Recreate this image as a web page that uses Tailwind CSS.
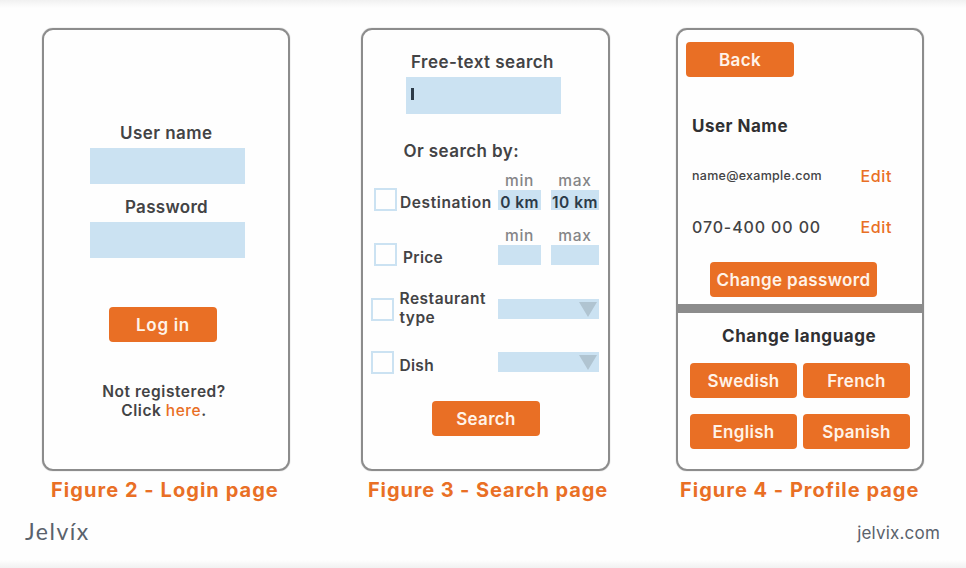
<!DOCTYPE html>
<html lang="en">
<head>
<meta charset="utf-8">
<title>Jelvix wireframes</title>
<script src="https://cdn.jsdelivr.net/npm/@tailwindcss/browser@4"></script>
</head>
<body class="w-[966px] h-[568px] overflow-hidden bg-[#fefefe] font-['Inter',sans-serif] font-semibold text-[#434345] text-[17px] leading-5 whitespace-nowrap flex flex-col">
<div class="h-2 bg-linear-to-b from-[#f1f1f1] to-[#fefefe] shrink-0"></div>
<main class="flex items-start mt-5 pl-[42px] shrink-0">

  <figure class="w-[248px]">
    <section class="h-[443px] border-2 border-[#8c8c8c] shadow-[0_0_1px_#8c8c8c] rounded-[11px] flex flex-col items-start">
      <label class="mt-[93px] ml-[76px] tracking-[0.45px]">User name</label>
      <div class="mt-[5px] ml-[46px] w-[155px] h-[36px] bg-[#cbe2f2]"></div>
      <label class="mt-[13px] ml-[81px] tracking-[0.3px]">Password</label>
      <div class="mt-[5px] ml-[46px] w-[155px] h-[36px] bg-[#cbe2f2]"></div>
      <button class="mt-[49px] ml-[65px] w-[108px] h-[35px] rounded bg-[#e96f25] text-[#fff3e8] tracking-[0.7px]">Log in</button>
      <p class="mt-[40px] ml-[57px] w-[126px] text-center text-[15.5px] leading-[19px] tracking-[0.55px]">Not registered?<br>Click <a class="font-medium text-[#e96f25]">here</a>.</p>
    </section>
    <figcaption class="mt-[9px] ml-[9px] text-[20px] font-bold tracking-[1.05px] text-[#e96f25]">Figure 2 - Login page</figcaption>
  </figure>

  <figure class="ml-[71px] w-[249px]">
    <section class="h-[443px] border-2 border-[#8c8c8c] shadow-[0_0_1px_#8c8c8c] rounded-[11px] flex flex-col items-start">
      <label class="mt-[22px] ml-[48px] tracking-[0.45px]">Free-text search</label>
      <div class="mt-[5px] ml-[43px] w-[155px] h-[37px] bg-[#cbe2f2] pt-[11px] pl-[5px]"><div class="w-[2.5px] h-[12px] bg-[#2c3a48]"></div></div>
      <p class="mt-[27px] ml-[40.5px] tracking-[0.42px]">Or search by:</p>

      <div class="mt-[9px] h-[41px] flex items-start text-[15.5px] w-full">
        <i class="mt-[18px] ml-[11px] size-[23px] border-2 border-[#cbe2f2] shrink-0"></i>
        <span class="mt-[23px] ml-[3px] w-[98px] tracking-[0.6px]">Destination</span>
        <div class="w-[43px] shrink-0 text-center"><div class="pt-px -mb-px font-medium text-[#858587] tracking-[0.75px]">min</div><div class="h-5 bg-[#cbe2f2] text-[#2c3a48] pt-[3px] tracking-[0.4px]">0 km</div></div>
        <div class="ml-[10px] w-[48px] shrink-0 text-center"><div class="pt-px -mb-px font-medium text-[#858587] tracking-[0.75px]">max</div><div class="h-5 bg-[#cbe2f2] text-[#2c3a48] pt-[3px] tracking-[0.5px]">10 km</div></div>
      </div>

      <div class="mt-[14px] h-[41px] flex items-start text-[15.5px] w-full">
        <i class="mt-[18px] ml-[11px] size-[23px] border-2 border-[#cbe2f2] shrink-0"></i>
        <span class="mt-[23px] ml-[6px] w-[95px] tracking-[0.3px]">Price</span>
        <div class="w-[43px] shrink-0 text-center"><div class="pt-px -mb-px font-medium text-[#858587] tracking-[0.75px]">min</div><div class="h-5 bg-[#cbe2f2]"></div></div>
        <div class="ml-[10px] w-[48px] shrink-0 text-center"><div class="pt-px -mb-px font-medium text-[#858587] tracking-[0.75px]">max</div><div class="h-5 bg-[#cbe2f2]"></div></div>
      </div>

      <div class="mt-[23px] h-[38px] flex items-start text-[15.5px] leading-[19px] w-full">
        <i class="mt-[9px] ml-[8px] size-[23px] border-2 border-[#cbe2f2] shrink-0"></i>
        <span class="ml-[5.5px] w-[98.5px] tracking-[0.5px]">Restaurant<br>type</span>
        <div class="mt-[10px] w-[101px] h-5 bg-[#cbe2f2] flex justify-end pr-[2px] pt-[3px]"><svg width="18" height="15" viewBox="0 0 18 15"><path d="M0 0H18L9 15Z" fill="#b0c4d1"/></svg></div>
      </div>

      <div class="mt-[24px] h-6 flex items-start text-[15.5px] w-full">
        <i class="ml-[8px] size-[23px] border-2 border-[#cbe2f2] shrink-0"></i>
        <span class="mt-[5px] ml-[5.5px] w-[98.5px] tracking-[0.3px]">Dish</span>
        <div class="mt-px w-[101px] h-5 bg-[#cbe2f2] flex justify-end pr-[2px] pt-[3px]"><svg width="18" height="15" viewBox="0 0 18 15"><path d="M0 0H18L9 15Z" fill="#b0c4d1"/></svg></div>
      </div>
      <button class="mt-[26px] ml-[69px] w-[108px] h-[35px] rounded bg-[#e96f25] text-[#fff3e8] tracking-[0.3px]">Search</button>
    </section>
    <figcaption class="mt-[9px] ml-[7px] text-[20px] font-bold tracking-[0.88px] text-[#e96f25]">Figure 3 - Search page</figcaption>
  </figure>

  <figure class="ml-[66px] w-[248px]">
    <section class="h-[443px] border-2 border-[#8c8c8c] shadow-[0_0_1px_#8c8c8c] rounded-[11px] flex flex-col items-start">
      <button class="mt-[12px] ml-[8px] w-[108px] h-[35px] rounded bg-[#e96f25] text-[#fff3e8] tracking-[0.4px]">Back</button>
      <h2 class="mt-[39px] ml-[14px] font-bold text-[#303032] tracking-[0.5px]">User Name</h2>
      <div class="mt-[30px] ml-[14px] w-[200px] flex justify-between font-medium"><span class="text-[12.5px] tracking-[0.28px]">name@example.com</span><a class="text-[16px] text-[#e96f25] tracking-[0.65px]">Edit</a></div>
      <div class="mt-[31px] ml-[14px] w-[200px] flex justify-between font-medium"><span class="text-[16px] tracking-[0.88px]">070-400 00 00</span><a class="text-[16px] text-[#e96f25] tracking-[0.65px]">Edit</a></div>
      <button class="mt-[25px] ml-[32px] w-[167px] h-[35px] rounded bg-[#e96f25] text-[#fff3e8] tracking-[0.35px]">Change password</button>
      <div class="mt-[7px] w-full h-[9px] bg-[#8c8c8c] shrink-0"></div>
      <h2 class="mt-[13px] ml-[44px] font-bold text-[#303032] tracking-[0.58px]">Change language</h2>
      <div class="mt-[17px] ml-[12px] grid grid-cols-[107px_107px] gap-x-[6px] gap-y-[16px] text-[#fff3e8] tracking-[0.3px]">
        <button class="h-[35px] rounded bg-[#e96f25]">Swedish</button>
        <button class="h-[35px] rounded bg-[#e96f25]">French</button>
        <button class="h-[35px] rounded bg-[#e96f25]">English</button>
        <button class="h-[35px] rounded bg-[#e96f25]">Spanish</button>
      </div>
    </section>
    <figcaption class="mt-[9px] ml-[4px] text-[20px] font-bold tracking-[1px] text-[#e96f25]">Figure 4 - Profile page</figcaption>
  </figure>
</main>
<footer class="mt-[20px] pl-[25px] pr-[26px] flex justify-between items-start shrink-0 h-[40px]">
  <span class="font-['Lato',sans-serif] font-normal text-[23px] leading-[22px] tracking-[1.5px] text-[#5a626c]">Jelvíx</span>
  <span class="mt-[3px] text-[17px] font-normal tracking-[0.2px] text-[#5a626c]">jelvix.com</span>
</footer>
<div class="h-2 bg-linear-to-t from-[#f1f1f1] to-[#fefefe] shrink-0"></div>
</body>
</html>
